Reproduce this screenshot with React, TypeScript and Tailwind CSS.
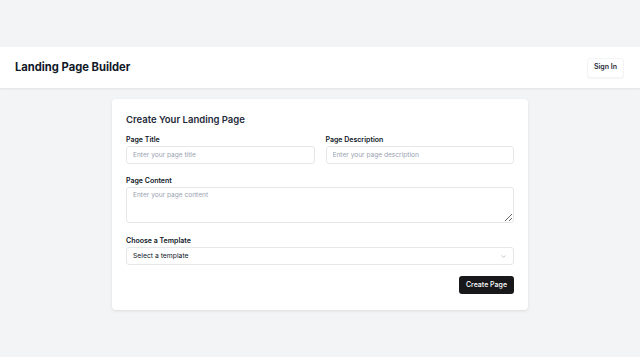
import { ChevronDown } from 'lucide-react';

const Field = ({ label, placeholder }: { label: string; placeholder: string }) => (
  <div className="flex flex-col">
    <label className="mb-[1px] text-[7px] font-semibold leading-[11px] text-gray-900">{label}</label>
    <input
      placeholder={placeholder}
      className="h-[18px] rounded-[3px] border border-gray-200 bg-white px-[6px] text-[6.6px] text-gray-900 placeholder:text-gray-400 outline-none"
    />
  </div>
);

export default function App() {
  return (
    <div className="min-h-[357px] bg-[#f3f4f6] font-['Inter',sans-serif] pt-[47px]">
      <header className="flex h-[41px] items-center justify-between bg-white pl-[15px] pr-[16px] shadow-[0_1px_2px_rgba(0,0,0,0.08)]">
        <h1 className="text-[11.2px] font-bold text-gray-900">Landing Page Builder</h1>
        <button className="h-[20px] rounded-[3px] border border-gray-100 bg-white px-[6px] text-[7px] font-semibold text-gray-800 shadow-[0_1px_1px_rgba(0,0,0,0.04)]">
          Sign In
        </button>
      </header>

      <main className="flex justify-center pt-[11px]">
        <div className="w-[416px] rounded-[4px] bg-white px-[14px] pt-[14px] pb-[16px] shadow-[0_1px_3px_rgba(0,0,0,0.1)]">
          <h2 className="mb-[7px] text-[9.5px] font-semibold leading-[14px] text-gray-800">Create Your Landing Page</h2>

          <div className="grid grid-cols-2 gap-x-[11px]">
            <Field label="Page Title" placeholder="Enter your page title" />
            <Field label="Page Description" placeholder="Enter your page description" />
          </div>

          <div className="mt-[11px] flex flex-col">
            <label className="mb-[1px] text-[7px] font-semibold leading-[11px] text-gray-900">Page Content</label>
            <textarea
              placeholder="Enter your page content"
              className="h-[36px] resize-y rounded-[3px] border border-gray-200 bg-white px-[6px] py-[3px] text-[6.6px] text-gray-900 placeholder:text-gray-400 outline-none"
            />
          </div>

          <div className="mt-[12px] flex flex-col">
            <label className="mb-[1px] text-[7px] font-semibold leading-[11px] text-gray-900">Choose a Template</label>
            <div className="flex h-[18px] items-center justify-between rounded-[3px] border border-gray-200 bg-white px-[6px]">
              <span className="text-[6.8px] text-gray-900">Select a template</span>
              <ChevronDown size={7} className="text-gray-400" />
            </div>
          </div>

          <div className="mt-[11px] flex justify-end">
            <button className="h-[18px] rounded-[3px] bg-[#18181b] px-[7px] text-[7px] font-medium text-white">
              Create Page
            </button>
          </div>
        </div>
      </main>
    </div>
  );
}
